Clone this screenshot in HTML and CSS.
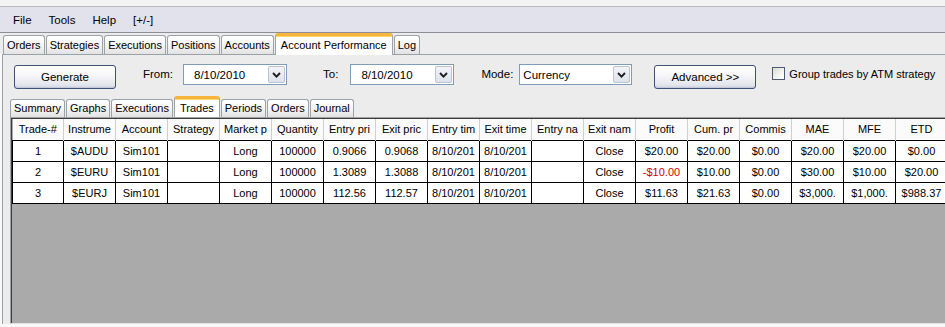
FILE: index.html
```html
<!DOCTYPE html>
<html>
<head>
<meta charset="utf-8">
<title>Account Performance</title>
<link rel="stylesheet" href="styles.css">
</head>
<body>
<div class="app">
  <div class="title-strip"></div>
  <nav class="menubar">
    <span>File</span><span>Tools</span><span>Help</span><span>[+/-]</span>
  </nav>
  <div class="tabstrip top">
    <div class="tab">Orders</div>
    <div class="tab">Strategies</div>
    <div class="tab">Executions</div>
    <div class="tab">Positions</div>
    <div class="tab">Accounts</div>
    <div class="tab active">Account Performance</div>
    <div class="tab">Log</div>
  </div>
  <div class="panel">
    <div class="toolbar">
      <button class="btn btn-generate">Generate</button>
      <span class="lbl lbl-from">From:</span>
      <div class="combo combo-date">
        <span class="val">8/10/2010</span>
        <span class="drop"><svg width="9" height="6" viewBox="0 0 9 6"><path d="M1 1 L4.5 4.6 L8 1" fill="none" stroke="#1e1e1e" stroke-width="1.9"/></svg></span>
      </div>
      <span class="lbl lbl-to">To:</span>
      <div class="combo combo-date">
        <span class="val">8/10/2010</span>
        <span class="drop"><svg width="9" height="6" viewBox="0 0 9 6"><path d="M1 1 L4.5 4.6 L8 1" fill="none" stroke="#1e1e1e" stroke-width="1.9"/></svg></span>
      </div>
      <span class="lbl lbl-mode">Mode:</span>
      <div class="combo combo-mode">
        <span class="val">Currency</span>
        <span class="drop"><svg width="9" height="6" viewBox="0 0 9 6"><path d="M1 1 L4.5 4.6 L8 1" fill="none" stroke="#1e1e1e" stroke-width="1.9"/></svg></span>
      </div>
      <button class="btn btn-advanced">Advanced &gt;&gt;</button>
      <label class="check"><span class="box"></span><span>Group trades by ATM strategy</span></label>
    </div>
    <div class="tabstrip sub">
      <div class="tab">Summary</div>
      <div class="tab">Graphs</div>
      <div class="tab">Executions</div>
      <div class="tab active">Trades</div>
      <div class="tab">Periods</div>
      <div class="tab">Orders</div>
      <div class="tab">Journal</div>
    </div>
    <div class="grid-frame">
      <div class="grid-inner">
        <table class="grid">
          <colgroup>
            <col class="c-first">
            <col><col><col><col><col><col><col><col><col><col><col><col><col><col><col><col><col>
          </colgroup>
          <thead>
            <tr>
              <th>Trade-#</th><th>Instrume</th><th>Account</th><th>Strategy</th><th>Market p</th><th>Quantity</th>
              <th>Entry pri</th><th>Exit pric</th><th>Entry tim</th><th>Exit time</th><th>Entry na</th><th>Exit nam</th>
              <th>Profit</th><th>Cum. pr</th><th>Commis</th><th>MAE</th><th>MFE</th><th>ETD</th>
            </tr>
          </thead>
          <tbody>
            <tr>
              <td>1</td><td>$AUDU</td><td>Sim101</td><td></td><td>Long</td><td>100000</td>
              <td>0.9066</td><td>0.9068</td><td>8/10/201</td><td>8/10/201</td><td></td><td>Close</td>
              <td>$20.00</td><td>$20.00</td><td>$0.00</td><td>$20.00</td><td>$20.00</td><td>$0.00</td>
            </tr>
            <tr>
              <td>2</td><td>$EURU</td><td>Sim101</td><td></td><td>Long</td><td>100000</td>
              <td>1.3089</td><td>1.3088</td><td>8/10/201</td><td>8/10/201</td><td></td><td>Close</td>
              <td class="neg">-$10.00</td><td>$10.00</td><td>$0.00</td><td>$30.00</td><td>$10.00</td><td>$20.00</td>
            </tr>
            <tr>
              <td>3</td><td>$EURJ</td><td>Sim101</td><td></td><td>Long</td><td>100000</td>
              <td>112.56</td><td>112.57</td><td>8/10/201</td><td>8/10/201</td><td></td><td>Close</td>
              <td>$11.63</td><td>$21.63</td><td>$0.00</td><td>$3,000.</td><td>$1,000.</td><td>$988.37</td>
            </tr>
          </tbody>
        </table>
      </div>
    </div>
  </div>
</div>
</body>
</html>
```

FILE: styles.css
```css
* { box-sizing: border-box; }

html, body {
  margin: 0;
  padding: 0;
}

body {
  width: 945px;
  height: 327px;
  overflow: hidden;
  background: #f9f9f9;
  font-family: "Liberation Sans", Arial, sans-serif;
  font-size: 11px;
  color: #000;
}

.app {
  width: 945px;
  height: 327px;
  overflow: hidden;
}

.title-strip {
  height: 6px;
  background: #f3f3f3;
}

.menubar {
  height: 27px;
  display: flex;
  align-items: center;
  gap: 17px;
  padding-left: 13px;
  background: #e2e2ec;
  border-top: 1px solid #b9b9c2;
  border-bottom: 1px solid #8e8e96;
  font-size: 11.5px;
}

/* ---------- tabs ---------- */
.tabstrip {
  display: flex;
  align-items: flex-end;
  gap: 1px;
}

.tabstrip.top {
  height: 21px;
  padding-left: 3px;
  background: #ececec;
}

.tab {
  height: 19px;
  padding: 0 3px;
  line-height: 18px;
  white-space: nowrap;
  border: 1px solid #9ba3a8;
  border-bottom: none;
  border-radius: 3px 3px 0 0;
  background: linear-gradient(#ffffff, #f4f4f4 55%, #e2e2e2);
}

.tab.active {
  position: relative;
  z-index: 1;
  height: 22px;
  margin-bottom: -1px;
  line-height: 19px;
  background: #ffffff;
  border-color: #9ba3a8;
  border-top: 3px solid #f6b53c;
  box-shadow: inset 0 1px 0 #ffd76e;
}

.tabstrip.top .tab.active {
  padding: 0 5px;
}

/* ---------- panel ---------- */
.panel {
  margin-left: 2px;
  border-top: 1px solid #9ba3a8;
  border-left: 1px solid #9ba3a8;
  background: #ececec;
}

.toolbar {
  height: 41px;
  display: flex;
  align-items: flex-start;
  padding: 9px 0 0 11px;
}

.btn {
  width: 102px;
  height: 24px;
  margin-top: 1px;
  padding: 0;
  font-family: inherit;
  font-size: 11.5px;
  color: #000;
  border: 1px solid #3f5175;
  border-radius: 3px;
  background: linear-gradient(#ffffff, #f6f6f9 45%, #e4e6ee 85%, #cfd3e0);
  box-shadow: inset 0 -1px 0 #c5cadb;
}

.lbl {
  line-height: 21px;
  white-space: nowrap;
  font-size: 11.5px;
}

.lbl-from { margin-left: 27px; }
.lbl-to   { margin-left: 36px; }
.lbl-mode { margin-left: 27px; }

.combo {
  height: 21px;
  display: flex;
  align-items: center;
  justify-content: space-between;
  border: 1px solid #7f9db9;
  background: #ffffff;
  padding-right: 1px;
  font-size: 11.5px;
}

.combo-date {
  width: 104px;
  padding-left: 10px;
}

.lbl-from + .combo-date { margin-left: 10px; }
.lbl-to + .combo-date { margin-left: 12px; }

.combo-mode {
  width: 113px;
  margin-left: 6px;
  padding-left: 3px;
}

.drop {
  width: 17px;
  height: 17px;
  display: flex;
  align-items: center;
  justify-content: center;
  border: 1px solid #bcc3d2;
  border-radius: 2px;
  background: linear-gradient(#f2f4f8, #dde2ec);
}

.btn-advanced { margin-left: 22px; }

.check {
  display: flex;
  align-items: center;
  gap: 4px;
  margin-left: 16px;
  margin-top: 3px;
  font-size: 11px;
}

.box {
  width: 13px;
  height: 13px;
  border: 1px solid #4c5a72;
  background: linear-gradient(135deg, #dcdcd4, #f8f8f6 70%, #ffffff);
}

/* ---------- sub tabs ---------- */
.tabstrip.sub {
  height: 21px;
  padding-left: 7px;
  gap: 1px;
}

.tabstrip.sub .tab {
  height: 18px;
  line-height: 17px;
  padding: 0 3px;
}

.tabstrip.sub .tab.active {
  height: 21px;
  line-height: 18px;
  margin-bottom: 0;
  padding: 0 5px;
}

/* ---------- grid ---------- */
.grid-frame {
  margin-left: 7px;
  height: 207px;
  border-top: 1px solid #a3a3a3;
  border-left: 1px solid #a3a3a3;
  border-bottom: 1px solid #e2e2e2;
}

.grid-inner {
  height: 100%;
  border-top: 1px solid #3c3c3c;
  border-left: 1px solid #3c3c3c;
  background: #aaaaaa;
  overflow: hidden;
}

.grid {
  width: 935px;
  table-layout: fixed;
  border-collapse: collapse;
  font-size: 11px;
}

.grid col { width: 52px; }
.grid col.c-first { width: 51px; }

.grid th {
  height: 21px;
  padding: 0 2px;
  font-weight: normal;
  white-space: nowrap;
  overflow: hidden;
  text-align: center;
  background: #fbfbfb;
  border-right: 1px solid #cfcfcf;
}

.grid td {
  height: 21px;
  padding: 0 2px;
  white-space: nowrap;
  overflow: hidden;
  text-align: center;
  background: #ffffff;
  border: 1px solid #000000;
}

.grid td.neg { color: #d00000; }
```
